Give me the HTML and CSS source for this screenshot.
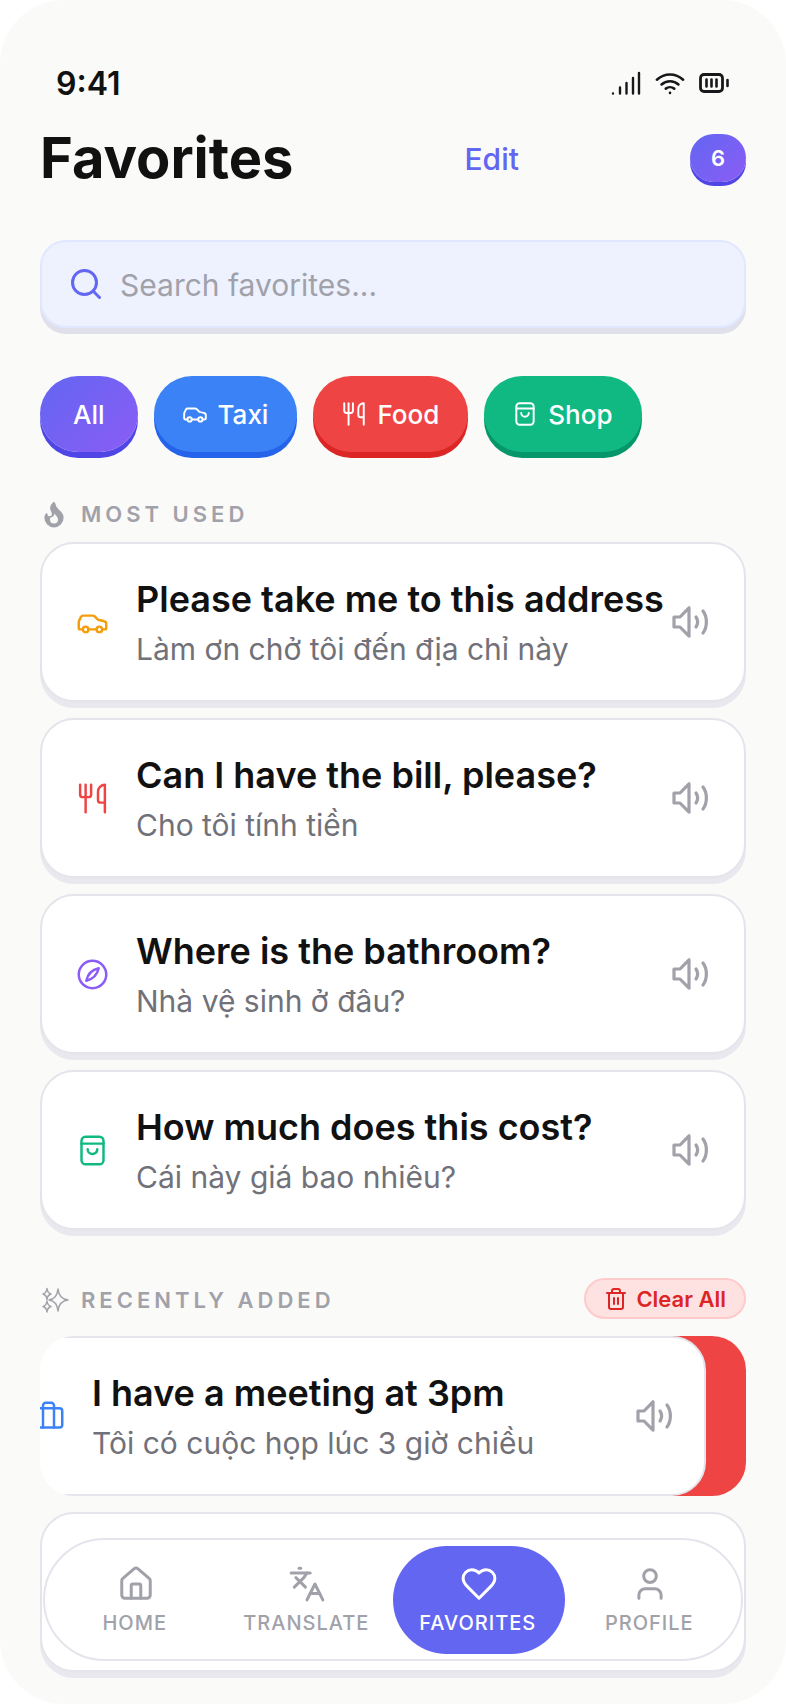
FILE: index.html
```html
<!DOCTYPE html>
<html lang="en">
<head>
    <meta charset="UTF-8">
    <meta name="viewport" content="width=device-width, initial-scale=1.0">
    <title>Favorites</title>
    <link rel="stylesheet" href="styles.css">
</head>
<body>

<div class="phone">
    <!-- Status bar -->
    <div class="status-bar">
        <span class="time">9:41</span>
        <div class="status-icons">
            <svg width="30" height="24" viewBox="0 0 30 24" fill="none" stroke="#18181b" stroke-width="2.4" stroke-linecap="round">
                <path d="M2 22.5v.1M9 16.5v6M15.5 12v10.5M22 7v15.5M28 2v20.5"/>
            </svg>
            <svg width="30" height="24" viewBox="0 0 32 24" fill="none" stroke="#18181b" stroke-width="2.8" stroke-linecap="round" stroke-linejoin="round">
                <path d="M2 8.5C10 1 22 1 30 8.5M7 13.5c5-4.5 13-4.5 18 0M11.5 18c2.5-2 6.5-2 9 0M16 22.5v.1"/>
            </svg>
            <svg width="30" height="20" viewBox="0 0 30 20" fill="none" stroke="#18181b" stroke-linecap="round">
                <rect x="1.5" y="1.5" width="22" height="17" rx="3.5" stroke-width="2.8"/>
                <path d="M7.5 6.5v7M12.5 6.5v7M17.5 6.5v7M28.5 7v6" stroke-width="2.6"/>
            </svg>
        </div>
    </div>

    <!-- Header -->
    <div class="page-header">
        <h1>Favorites</h1>
        <span class="edit-link">Edit</span>
        <span class="count-badge">6</span>
    </div>

    <!-- Search -->
    <div class="search-box">
        <svg class="icon" width="36" height="36" viewBox="0 0 24 24" stroke="#6366f1" stroke-width="2">
            <circle cx="11" cy="11" r="8"/>
            <path d="m21 21-4.3-4.3"/>
        </svg>
        <span class="search-hint">Search favorites...</span>
    </div>

    <!-- Filter chips -->
    <div class="chips">
        <div class="chip chip-all">All</div>
        <div class="chip chip-taxi">
            <svg class="icon" width="26" height="26" viewBox="0 0 24 24" stroke="#fff" stroke-width="1.8">
                <path d="M19 17h2c.6 0 1-.4 1-1v-3c0-.9-.7-1.7-1.5-1.9C18.7 10.6 16 10 16 10s-1.3-1.4-2.2-2.3c-.5-.4-1.1-.7-1.8-.7H5c-.6 0-1.1.4-1.4.9l-1.4 2.9A3.7 3.7 0 0 0 2 12v4c0 .6.4 1 1 1h2"/>
                <circle cx="7" cy="17" r="2"/>
                <path d="M9 17h6"/>
                <circle cx="17" cy="17" r="2"/>
            </svg>
            Taxi
        </div>
        <div class="chip chip-food">
            <svg class="icon" width="26" height="26" viewBox="0 0 24 24" stroke="#fff" stroke-width="1.8">
                <path d="M3 2v7c0 1.1.9 2 2 2h4a2 2 0 0 0 2-2V2"/>
                <path d="M7 2v20"/>
                <path d="M21 15V2a5 5 0 0 0-5 5v6c0 1.1.9 2 2 2h3Zm0 0v7"/>
            </svg>
            Food
        </div>
        <div class="chip chip-shop">
            <svg class="icon" width="26" height="26" viewBox="0 0 24 24" stroke="#fff" stroke-width="1.8">
                <path d="M7 2h10a3 3 0 0 1 3 3v14a3 3 0 0 1-3 3H7a3 3 0 0 1-3-3V5a3 3 0 0 1 3-3z"/>
                <path d="M4 7h16"/>
                <path d="M8.5 11a3.5 3.5 0 0 0 7 0"/>
            </svg>
            Shop
        </div>
    </div>

    <!-- Most used -->
    <div class="section-head">
        <div class="section-title">
            <svg class="icon" width="30" height="30" viewBox="0.8 0 24 24" stroke="#a1a1aa" stroke-width="1.4">
                <path class="flame-body" d="M8.5 14.5A2.5 2.5 0 0 0 11 12c0-1.38-.5-2-1-3-1.072-2.143-.224-4.054 2-6 .5 2.5 2 4.9 4 6.5 2 1.6 3 3.5 3 5.5a7 7 0 1 1-14 0c0-1.153.433-2.294 1-3a2.5 2.5 0 0 0 2.5 2.5z"/>
                <path class="flame-core" d="M12.5 11.5c.8 1.6 2.7 2.7 2.7 4.8a3.2 3.2 0 1 1-6.4 0c0-.7.2-1.2.5-1.6 1.3.3 2.8-.8 3.2-3.2z"/>
            </svg>
            MOST USED
        </div>
    </div>

    <div class="card-list">
        <div class="card">
            <svg class="icon" width="33" height="33" viewBox="0 0 24 24" stroke="#f59e0b" stroke-width="1.8">
                <path d="M19 17h2c.6 0 1-.4 1-1v-3c0-.9-.7-1.7-1.5-1.9C18.7 10.6 16 10 16 10s-1.3-1.4-2.2-2.3c-.5-.4-1.1-.7-1.8-.7H5c-.6 0-1.1.4-1.4.9l-1.4 2.9A3.7 3.7 0 0 0 2 12v4c0 .6.4 1 1 1h2"/>
                <circle cx="7" cy="17" r="2"/>
                <path d="M9 17h6"/>
                <circle cx="17" cy="17" r="2"/>
            </svg>
            <div class="card-text">
                <div class="phrase">Please take me to this address</div>
                <div class="translation">Làm ơn chở tôi đến địa chỉ này</div>
            </div>
            <svg class="icon" width="36" height="32" viewBox="0 0 36 32" stroke="#a1a1aa" stroke-width="3.2">
                <path d="M2 11h6l9-9.2v28.400L8 21H2z"/>
                <path d="M24 11c2 3 2 7 0 10"/>
                <path d="M31 5c4.5 6 4.5 16 0 22"/>
            </svg>
        </div>
        <div class="card">
            <svg class="icon" width="33" height="33" viewBox="0 0 24 24" stroke="#ef4444" stroke-width="1.8">
                <path d="M3 2v7c0 1.1.9 2 2 2h4a2 2 0 0 0 2-2V2"/>
                <path d="M7 2v20"/>
                <path d="M21 15V2a5 5 0 0 0-5 5v6c0 1.1.9 2 2 2h3Zm0 0v7"/>
            </svg>
            <div class="card-text">
                <div class="phrase">Can I have the bill, please?</div>
                <div class="translation">Cho tôi tính tiền</div>
            </div>
            <svg class="icon" width="36" height="32" viewBox="0 0 36 32" stroke="#a1a1aa" stroke-width="3.2">
                <path d="M2 11h6l9-9.2v28.400L8 21H2z"/>
                <path d="M24 11c2 3 2 7 0 10"/>
                <path d="M31 5c4.5 6 4.5 16 0 22"/>
            </svg>
        </div>
        <div class="card">
            <svg class="icon" width="33" height="33" viewBox="0 0 24 24" stroke="#8b5cf6" stroke-width="1.8">
                <circle cx="12" cy="12" r="10"/>
                <path d="M16.5 7.5C12 8.5 8.5 12 7.5 16.5 12 15.500 15.500 12 16.500 7.500z"/>
            </svg>
            <div class="card-text">
                <div class="phrase">Where is the bathroom?</div>
                <div class="translation">Nhà vệ sinh ở đâu?</div>
            </div>
            <svg class="icon" width="36" height="32" viewBox="0 0 36 32" stroke="#a1a1aa" stroke-width="3.2">
                <path d="M2 11h6l9-9.2v28.400L8 21H2z"/>
                <path d="M24 11c2 3 2 7 0 10"/>
                <path d="M31 5c4.5 6 4.5 16 0 22"/>
            </svg>
        </div>
        <div class="card">
            <svg class="icon" width="33" height="33" viewBox="0 0 24 24" stroke="#10b981" stroke-width="1.8">
                <path d="M7 2h10a3 3 0 0 1 3 3v14a3 3 0 0 1-3 3H7a3 3 0 0 1-3-3V5a3 3 0 0 1 3-3z"/>
                <path d="M4 7h16"/>
                <path d="M8.5 11a3.5 3.5 0 0 0 7 0"/>
            </svg>
            <div class="card-text">
                <div class="phrase">How much does this cost?</div>
                <div class="translation">Cái này giá bao nhiêu?</div>
            </div>
            <svg class="icon" width="36" height="32" viewBox="0 0 36 32" stroke="#a1a1aa" stroke-width="3.2">
                <path d="M2 11h6l9-9.2v28.400L8 21H2z"/>
                <path d="M24 11c2 3 2 7 0 10"/>
                <path d="M31 5c4.5 6 4.5 16 0 22"/>
            </svg>
        </div>
    </div>

    <!-- Recently added -->
    <div class="section-head section-recent">
        <div class="section-title">
            <svg class="icon" width="30" height="30" viewBox="0 0 30 30" stroke="#a1a1aa" stroke-width="1.5">
                <path d="M18 4Q19 14 28 15 19 16 18 26 17 16 9 15 17 14 18 4z"/>
                <path d="M7 3.5Q7.5 8 11 9 7.5 10 7 14.5 6.5 10 3 9 6.5 8 7 3.5z"/>
                <path d="M7 16Q7.5 20.5 11 21.5 7.5 22.5 7 27 6.5 22.5 3 21.5 6.5 20.5 7 16z"/>
            </svg>
            RECENTLY ADDED
        </div>
        <div class="clear-all">
            <svg class="icon" width="24" height="24" viewBox="0 0 24 24" stroke="#dc2626" stroke-width="2">
                <path d="M3 6h18"/>
                <path d="M19 6v14c0 1-1 2-2 2H7c-1 0-2-1-2-2V6"/>
                <path d="M8 6V4c0-1 1-2 2-2h4c1 0 2 1 2 2v2"/>
                <path d="M10 11v6"/>
                <path d="M14 11v6"/>
            </svg>
            Clear All
        </div>
    </div>

    <div class="card-list">
        <!-- Card swiped left, delete action shows behind -->
        <div class="swipe-row">
            <div class="card swiped">
                <svg class="icon" width="33" height="33" viewBox="0 0 24 24" stroke="#3b82f6" stroke-width="1.8">
                    <rect x="2" y="6" width="20" height="14" rx="2"/>
                    <path d="M16 20V4a2 2 0 0 0-2-2h-4a2 2 0 0 0-2 2v16"/>
                </svg>
                <div class="card-text">
                    <div class="phrase">I have a meeting at 3pm</div>
                    <div class="translation">Tôi có cuộc họp lúc 3 giờ chiều</div>
                </div>
                <svg class="icon" width="36" height="32" viewBox="0 0 36 32" stroke="#a1a1aa" stroke-width="3.2">
                    <path d="M2 11h6l9-9.2v28.400L8 21H2z"/>
                    <path d="M24 11c2 3 2 7 0 10"/>
                    <path d="M31 5c4.5 6 4.5 16 0 22"/>
                </svg>
            </div>
        </div>
        <div class="card"></div>
    </div>

    <!-- Bottom navigation -->
    <nav class="bottom-nav">
        <div class="nav-item">
            <svg class="icon" width="38" height="38" viewBox="0 0 24 24" stroke="#a1a1aa" stroke-width="1.9">
                <path d="M15 21v-8a1 1 0 0 0-1-1h-4a1 1 0 0 0-1 1v8"/>
                <path d="M3 10a2 2 0 0 1 .709-1.528l7-5.999a2 2 0 0 1 2.582 0l7 5.999A2 2 0 0 1 21 10v9a2 2 0 0 1-2 2H5a2 2 0 0 1-2-2z"/>
            </svg>
            <span>HOME</span>
        </div>
        <div class="nav-item">
            <svg class="icon" width="38" height="38" viewBox="0 0 24 24" stroke="#a1a1aa" stroke-width="1.9">
                <path d="m5 8 6 6"/>
                <path d="m4 14 6-6 2-3"/>
                <path d="M2 5h12"/>
                <path d="M7 2h1"/>
                <path d="m22 22-5-10-5 10"/>
                <path d="M14 18h6"/>
            </svg>
            <span>TRANSLATE</span>
        </div>
        <div class="nav-item active">
            <svg class="icon" width="38" height="38" viewBox="0 0 24 24" stroke="#fff" stroke-width="1.9">
                <path d="M19 14c1.49-1.46 3-3.21 3-5.5A5.5 5.5 0 0 0 16.5 3c-1.76 0-3 .5-4.5 2-1.5-1.5-2.74-2-4.5-2A5.5 5.5 0 0 0 2 8.5c0 2.3 1.5 4.05 3 5.5l7 7Z"/>
            </svg>
            <span>FAVORITES</span>
        </div>
        <div class="nav-item">
            <svg class="icon" width="38" height="38" viewBox="0 0 24 24" stroke="#a1a1aa" stroke-width="1.9">
                <path d="M19 21v-2a4 4 0 0 0-4-4H9a4 4 0 0 0-4 4v2"/>
                <circle cx="12" cy="7" r="4"/>
            </svg>
            <span>PROFILE</span>
        </div>
    </nav>
</div>

</body>
</html>
```

FILE: styles.css
```css
/* Base */
* {
    box-sizing: border-box;
}

body {
    margin: 0;
    background-color: #fff;
    font-family: 'Inter', 'Noto Sans', sans-serif;
    color: #18181b;
}

.phone {
    position: relative;
    width: 786px;
    height: 1704px;
    padding: 60px 40px 0;
    overflow: hidden;
    background-color: #fafaf8;
    border-radius: 64px;
}

.icon {
    flex-shrink: 0;
    fill: none;
    stroke-linecap: round;
    stroke-linejoin: round;
}

.flame-body {
    fill: #a1a1aa;
}

.flame-core {
    fill: #fafaf8;
    stroke: none;
}

/* Status bar */
.status-bar {
    display: flex;
    justify-content: space-between;
    align-items: center;
    height: 46px;
    padding: 0 17px 0 16px;
}

.time {
    font-size: 32px;
    font-weight: 600;
    color: #111;
}

.status-icons {
    display: flex;
    align-items: center;
    gap: 14px;
}

/* Header */
.page-header {
    display: flex;
    justify-content: space-between;
    align-items: center;
    height: 62px;
    margin-top: 21px;
}

.page-header h1 {
    margin: 0;
    font-size: 56px;
    font-weight: 700;
    color: #111;
}

.edit-link {
    padding-top: 2px;
    font-size: 30px;
    font-weight: 500;
    color: #6366f1;
}

.count-badge {
    display: flex;
    justify-content: center;
    align-items: center;
    width: 56px;
    height: 48px;
    border-radius: 24px;
    background: linear-gradient(135deg, #6366f1, #8b5cf6);
    box-shadow: 0 4px 0 #4f46e5;
    color: #fff;
    font-size: 22px;
    font-weight: 600;
}

/* Search */
.search-box {
    display: flex;
    align-items: center;
    gap: 16px;
    height: 88px;
    margin-top: 51px;
    padding-left: 26px;
    background-color: #eef2ff;
    border: 2px solid #e0e7ff;
    border-radius: 26px;
    box-shadow: 0 6px 0 #e0e0ea;
    font-size: 30px;
    color: #a1a1aa;
}

.search-hint {
    padding-top: 2px;
}

/* Chips */
.chips {
    display: flex;
    gap: 16px;
    margin-top: 48px;
}

.chip {
    display: flex;
    align-items: center;
    gap: 10px;
    height: 76px;
    padding: 0 29px 0 28px;
    border-radius: 38px;
    color: #fff;
    font-size: 26px;
    font-weight: 500;
}

.chip-all {
    padding: 0 33px;
    background: linear-gradient(135deg, #6366f1, #8b5cf6);
    box-shadow: 0 6px 0 #4f46e5;
}

.chip-taxi {
    background-color: #3b82f6;
    box-shadow: 0 6px 0 #2563eb;
}

.chip-food {
    background-color: #ef4444;
    box-shadow: 0 6px 0 #dc2626;
}

.chip-shop {
    background-color: #10b981;
    box-shadow: 0 6px 0 #059669;
}

/* Section headers */
.section-head {
    display: flex;
    justify-content: space-between;
    align-items: center;
    margin-top: 46px;
}

.section-title {
    display: flex;
    align-items: center;
    gap: 11px;
    height: 30px;
    padding-top: 2px;
    font-size: 22px;
    font-weight: 600;
    letter-spacing: 4px;
    color: #a1a1aa;
}

.section-recent {
    margin-top: 48px;
}

.clear-all {
    display: flex;
    align-items: center;
    gap: 8px;
    height: 41px;
    padding: 0 18px;
    background-color: #fee2e2;
    border: 2px solid #fecaca;
    border-radius: 21px;
    color: #dc2626;
    font-size: 22px;
    font-weight: 600;
}

/* Cards */
.card-list {
    display: flex;
    flex-direction: column;
    gap: 16px;
    margin-top: 14px;
}

.section-recent + .card-list {
    margin-top: 17px;
}

.card {
    display: flex;
    align-items: center;
    gap: 27px;
    height: 160px;
    padding: 0 36px 0 34px;
    background-color: #fff;
    border: 2px solid #e4e4ec;
    border-radius: 34px;
    box-shadow: 0 6px 0 #e8e8ee;
}

.card-text {
    flex: 1;
    min-width: 0;
    padding-top: 1px;
}

.phrase {
    font-size: 36px;
    line-height: 46px;
    font-weight: 600;
    color: #111;
    white-space: nowrap;
}

.translation {
    margin-top: 7px;
    font-size: 30px;
    line-height: 40px;
    color: #71717a;
    white-space: nowrap;
}

/* Swiped card with the delete colour behind it */
.swipe-row {
    height: 160px;
    overflow: hidden;
    background: linear-gradient(90deg, #fff 50%, #ef4444 50%);
    border-radius: 34px;
}

.swiped {
    width: 710px;
    padding-right: 32px;
    box-shadow: none;
    transform: translateX(-44px);
}

/* Bottom navigation */
.bottom-nav {
    position: absolute;
    left: 43px;
    bottom: 43px;
    display: grid;
    grid-template-columns: repeat(4, 171.5px);
    width: 700px;
    height: 123px;
    padding: 6px 3px 5px 5px;
    background-color: #fff;
    border: 2px solid #e4e4ec;
    border-radius: 62px;
}

.nav-item {
    display: flex;
    flex-direction: column;
    align-items: center;
    justify-content: center;
    gap: 8px;
    padding-bottom: 1px;
    border-radius: 54px;
    font-size: 20px;
    line-height: 24px;
    font-weight: 500;
    letter-spacing: 1px;
    color: #a1a1aa;
}

.nav-item span {
    margin-left: -2px;
}

.nav-item.active {
    background-color: #6366f1;
    color: #fff;
}
```
